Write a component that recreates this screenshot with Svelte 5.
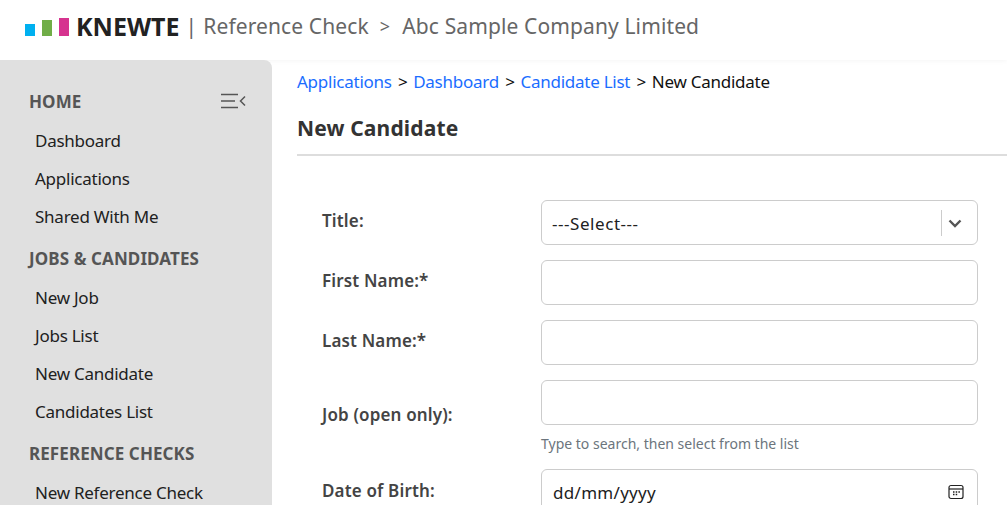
<script>
  const groups = [
    { title: 'JOBS & CANDIDATES', items: ['New Job', 'Jobs List', 'New Candidate', 'Candidates List'] },
    { title: 'REFERENCE CHECKS', items: ['New Reference Check'] }
  ];
</script>

<div class="page">
  <header class="top">
    <div class="bars">
      <span class="bar b1"></span>
      <span class="bar b2"></span>
      <span class="bar b3"></span>
    </div>
    <span class="brand">KNEWTE</span>
    <span class="pipe">|</span>
    <span class="crumbtop">Reference Check</span>
    <span class="gt">&gt;</span>
    <span class="crumbtop">Abc Sample Company Limited</span>
  </header>

  <div class="body">
    <aside class="side">
      <div class="side-head first">
        <span class="gh">HOME</span>
        <svg width="25" height="16" viewBox="0 0 25 16" fill="none" stroke="#555" stroke-width="1.6">
          <path d="M0 1.5H17M0 8H14M0 14.500H17" />
          <path d="M24 3.500L19.500 8L24 12.500" stroke-width="1.500" />
        </svg>
      </div>
      <a class="item" href="#d">Dashboard</a>
      <a class="item" href="#a">Applications</a>
      <a class="item" href="#s">Shared With Me</a>
      {#each groups as g}
        <div class="side-head"><span class="gh">{g.title}</span></div>
        {#each g.items as it}
          <a class="item" href="#i">{it}</a>
        {/each}
      {/each}
    </aside>

    <main class="main">
      <nav class="crumbs">
        <a href="#a">Applications</a><span class="sepgt">&gt;</span><a href="#d">Dashboard</a><span class="sepgt">&gt;</span><a href="#c">Candidate List</a><span class="sepgt">&gt;</span>New Candidate
      </nav>
      <h1>New Candidate</h1>

      <form class="form">
        <div class="row">
          <label for="t">Title:</label>
          <div class="field select">
            <span>---Select---</span>
            <span class="sep"></span>
            <svg width="14" height="9" viewBox="0 0 14 9" fill="none" stroke="#555" stroke-width="2.400"><path d="M1.500 1.500L7 7L12.500 1.500" /></svg>
          </div>
        </div>
        <div class="row">
          <label for="f">First Name:*</label>
          <input id="f" class="field" />
        </div>
        <div class="row">
          <label for="l">Last Name:*</label>
          <input id="l" class="field" />
        </div>
        <div class="row job">
          <label for="j">Job (open only):</label>
          <div class="col">
            <input id="j" class="field" />
            <small>Type to search, then select from the list</small>
          </div>
        </div>
        <div class="row dob">
          <label for="b">Date of Birth:</label>
          <div class="field date">
            <span>dd/mm/yyyy</span>
            <svg width="16" height="16" viewBox="0 0 16 16" fill="none" stroke="#222" stroke-width="1.200">
              <rect x="1" y="1.500" width="14" height="13" rx="2" />
              <path d="M1 5H15" />
              <path d="M5 8h1.500M7.700 8h1.500M10.400 8h1.500M5 10.500h1.500M7.700 10.500h1.500" stroke-width="1.400" />
            </svg>
          </div>
        </div>
      </form>
    </main>
  </div>
</div>

<style>
  :global(body) {
    margin: 0;
    background: #fff;
    overflow: hidden;
  }
  .page {
    width: 1007px;
    height: 505px;
    overflow: hidden;
    font-family: "Noto Sans", "Open Sans", sans-serif;
    color: #212121;
  }
  .top {
    height: 60px;
    box-sizing: border-box;
    display: flex;
    align-items: center;
    padding: 0 0 8px 25px;
    box-shadow: 0 0 6px rgba(0, 0, 0, 0.06);
    color: #666;
    font-size: 21px;
    letter-spacing: 0.12px;
  }
  .bars {
    display: flex;
    align-items: flex-end;
    gap: 7px;
    height: 18px;
    margin-right: 7px;
    margin-top: 1px;
  }
  .bar { width: 10px; display: block; }
  .b1 { height: 12px; background: #00b0f0; }
  .b2 { height: 16px; background: #70ad47; }
  .b3 { height: 18px; background: #d6338f; }
  .brand {
    font-weight: 700;
    font-size: 25px;
    color: #222;
    letter-spacing: 0;
  }
  .pipe { margin: 0 6px; }
  .gt { margin: 0 12px 0 11px; font-size: 18px; }
  .body {
    display: flex;
    height: 445px;
  }
  .side {
    width: 272px;
    flex: none;
    box-sizing: border-box;
    background: #e0e0e0;
    border-top-right-radius: 8px;
    padding: 26px 26px 0 29px;
    font-size: 17px;
    letter-spacing: -0.25px;
  }
  .side-head {
    display: flex;
    justify-content: space-between;
    align-items: center;
    height: 24px;
    margin: 17px 0 16px;
  }
  .side-head.first { margin-top: 3px; }
  .gh { font-weight: 700; color: #555; font-size: 17px; letter-spacing: 0.1px; }
  .item {
    display: block;
    height: 24px;
    line-height: 24px;
    margin: 0 0 14px 6px;
    color: #212121;
    text-decoration: none;
  }
  .main {
    flex: 1;
    min-width: 0;
    padding-left: 25px;
  }
  .crumbs {
    font-size: 17px;
    line-height: 24px;
    margin-top: 10px;
    color: #111;
    letter-spacing: -0.25px;
  }
  .crumbs a { color: #1a6dff; text-decoration: none; }
  .sepgt { margin: 0 5.800px 0 6.200px; }
  h1 {
    margin: 19px 0 0;
    font-size: 21px;
    line-height: 30px;
    font-weight: 700;
    color: #333;
    letter-spacing: 0.15px;
    padding-bottom: 11px;
    border-bottom: 2px solid #ddd;
  }
  .form {
    padding: 44px 29px 0 25px;
    display: flex;
    flex-direction: column;
    gap: 15px;
  }
  .row {
    display: grid;
    grid-template-columns: 219px 1fr;
    align-items: center;
  }
  .row.job { align-items: start; }
  label {
    font-size: 17px;
    font-weight: 600;
    color: #444;
    letter-spacing: 0.15px;
    padding-bottom: 4px;
  }
  .row.job label { padding-top: 23px; padding-bottom: 0; }
  .row.dob label { padding-bottom: 2px; }
  .field {
    height: 45px;
    box-sizing: border-box;
    width: 100%;
    border: 1px solid #ccc;
    border-radius: 6px;
    background: #fff;
    font-family: inherit;
    font-size: 17px;
    color: #212121;
    letter-spacing: 0.3px;
    padding: 1px 11px 0;
    display: flex;
    align-items: center;
  }
  .select { justify-content: flex-start; padding-left: 10px; letter-spacing: 0.55px; }
  .sep {
    width: 1px;
    height: 26px;
    background: #ccc;
    margin-left: auto;
    margin-right: 6px;
  }
  .select svg { margin-right: 4px; }
  .date { justify-content: space-between; }
  .date svg { margin-right: 2px; }
  small {
    display: block;
    font-size: 14px;
    color: #6c757d;
    margin-top: 9px;
    line-height: 20px;
    letter-spacing: 0;
  }
</style>
